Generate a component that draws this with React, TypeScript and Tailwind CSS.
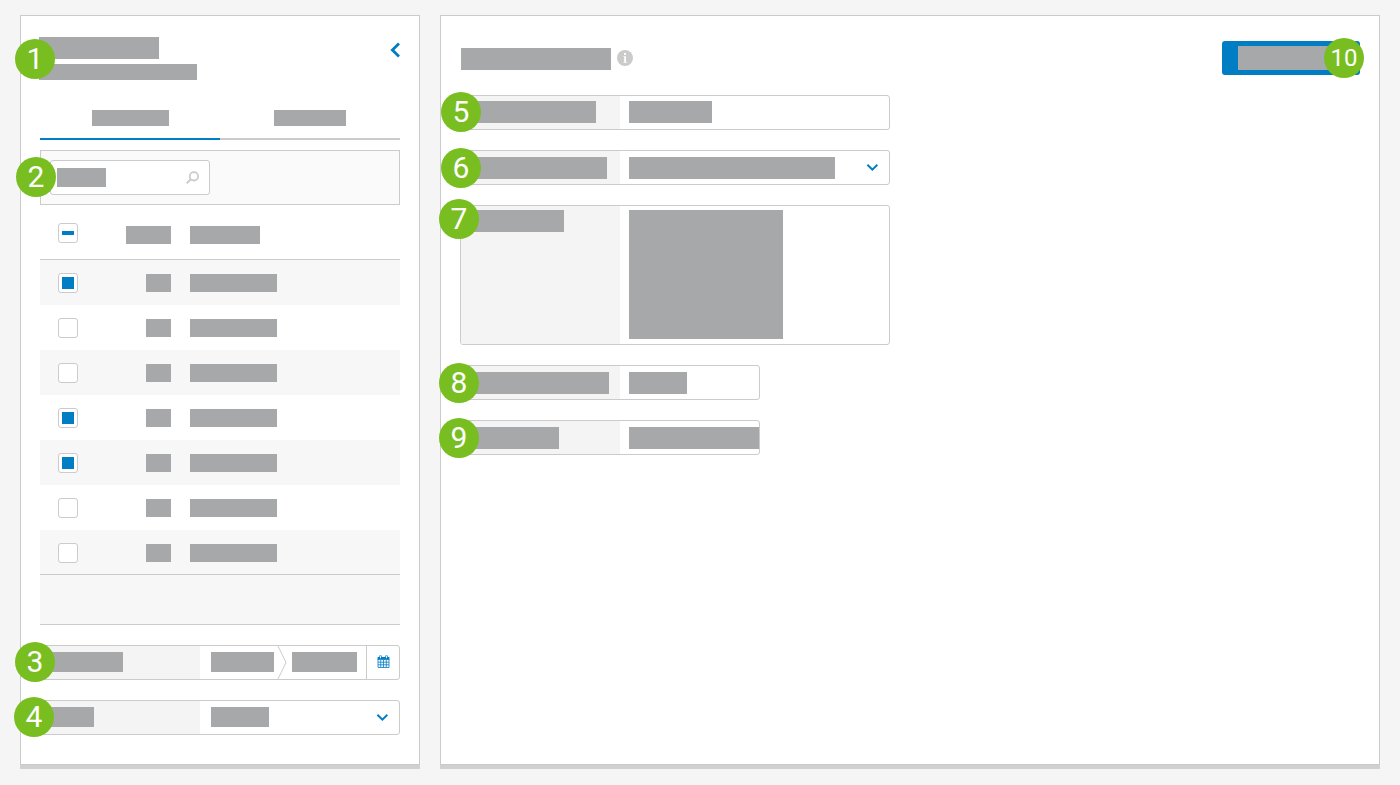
import { useEffect, useRef, useState } from 'react';
import clsx from 'clsx';

const rows = [
    { id: 1, checked: true },
    { id: 2, checked: false },
    { id: 3, checked: false },
    { id: 4, checked: true },
    { id: 5, checked: true },
    { id: 6, checked: false },
    { id: 7, checked: false },
];

const boxClass =
    'flex items-center justify-center appearance-none size-5 rounded-[3px] border border-[#cbcbcb] bg-white before:w-3 before:bg-[#007dc3] checked:before:h-3 indeterminate:before:h-1';
const overlayClass = 'absolute inset-0 size-full appearance-none bg-transparent resize-none px-2 outline-none';

function Block({ className }: { className: string }) {
    return <span className={clsx('block shrink-0 bg-[#a7a8aa]', className)} />;
}

function Badge({ value, className }: { value: number; className: string }) {
    return (
        <span
            className={clsx(
                "absolute z-10 flex size-10 items-center justify-center rounded-full bg-[#78be20] font-['Roboto',Arial,sans-serif] leading-none text-white pointer-events-none",
                value > 9 ? 'text-[24px]' : 'text-[30px]',
                className
            )}
        >
            {value}
        </span>
    );
}

function ChevronDown({ className }: { className: string }) {
    return (
        <svg className={clsx('shrink-0', className)} width="12" height="8" viewBox="0 0 12 8" fill="none" stroke="#007dc3" strokeWidth="2">
            <path d="M1.4.8 6.4 5.6 11.4.8" />
        </svg>
    );
}

function Field({ id, badge, badgeClass, labelClass, pad = 'pt-[6px]', className, children }: any) {
    return (
        <div className={clsx('relative', className)}>
            <div className="flex h-full overflow-hidden rounded-[3px] border border-[#cbcbcb] bg-white">
                <label htmlFor={id} className={clsx('w-[159px] shrink-0 bg-[#f4f4f4] pl-[9px]', pad)}>
                    <Block className={labelClass} />
                </label>
                <div className={clsx('relative flex min-w-0 flex-1 items-start', pad)}>{children}</div>
            </div>
            <Badge value={badge} className={badgeClass} />
        </div>
    );
}

function Sidebar() {
    const [items, setItems] = useState(rows);
    const allRef = useRef<HTMLInputElement>(null);
    const count = items.filter((item) => item.checked).length;
    const partial = count > 0 && count < items.length;

    useEffect(() => {
        if (allRef.current) allRef.current.indeterminate = partial;
    }, [partial]);

    const toggle = (id: number) => {
        setItems(items.map((item) => (item.id === id ? { ...item, checked: !item.checked } : item)));
    };

    return (
        <aside className="w-[400px] shrink-0 border border-[#cbcbcb] bg-white px-[19px] pb-[29px] pt-[21px] shadow-[0_4px_0_#d0d0d0]">
            <header className="relative -ml-px flex items-start justify-between">
                <div className="flex flex-col gap-[5px]">
                    <Block className="h-[22px] w-[120px]" />
                    <Block className="h-4 w-[158px]" />
                </div>
                <button type="button" aria-label="Collapse" className="pt-[5px]">
                    <svg width="11" height="16" viewBox="0 0 11 16" fill="none" stroke="#007dc3" strokeWidth="2.8">
                        <path d="M10 1.6 3.4 8l6.6 6.4" />
                    </svg>
                </button>
                <Badge value={1} className="-left-6 top-[2px]" />
            </header>

            <div role="tablist" className="mt-[30px] flex">
                <button type="button" role="tab" aria-selected="true" aria-label="First tab" className="flex flex-1 justify-center border-b-2 border-[#007dc3] pb-3">
                    <Block className="h-4 w-[77px]" />
                </button>
                <button type="button" role="tab" aria-selected="false" aria-label="Second tab" className="flex flex-1 justify-center border-b-2 border-[#cbcbcb] pb-3">
                    <Block className="h-4 w-[72px]" />
                </button>
            </div>

            <div className="relative mt-[10px] border border-[#cbcbcb] bg-[#fafafa] p-[9px]">
                <div className="relative flex h-[35px] w-40 items-start justify-between rounded-[3px] border border-[#cbcbcb] bg-white pl-[6px] pr-[10px] pt-[7px]">
                    <Block className="h-[19px] w-[49px]" />
                    <svg className="mt-[2px]" width="14" height="16" viewBox="0 0 14 16" fill="none" stroke="#cbcbcb" strokeWidth="1.8">
                        <circle cx="8.9" cy="6.3" r="4.2" />
                        <path d="M5.9 9.3 1.7 13.2" strokeWidth="2" />
                    </svg>
                    <input type="search" aria-label="Search" className={overlayClass} />
                </div>
                <Badge value={2} className="-left-[25px] top-[6px]" />
            </div>

            <table className="w-full table-fixed border-separate border-spacing-0">
                <thead>
                    <tr className="h-[55px] align-top">
                        <th className="w-[60px] border-b border-[#cbcbcb] pl-[18px] pt-[18px]">
                            <input
                                ref={allRef}
                                type="checkbox"
                                aria-label="Select all"
                                checked={count === items.length}
                                onChange={() => setItems(items.map((item) => ({ ...item, checked: count !== items.length })))}
                                className={boxClass}
                            />
                        </th>
                        <th className="w-[90px] border-b border-[#cbcbcb] pr-[19px] pt-[21px]">
                            <Block className="ml-auto h-[18px] w-[45px]" />
                        </th>
                        <th className="border-b border-[#cbcbcb] pt-[21px]">
                            <Block className="h-[18px] w-[70px]" />
                        </th>
                    </tr>
                </thead>
                <tbody>
                    {items.map((item) => (
                        <tr key={item.id} className="h-[45px] align-top odd:bg-[#f7f7f7]">
                            <td className="pl-[18px] pt-[13px]">
                                <input type="checkbox" aria-label={`Row ${item.id}`} checked={item.checked} onChange={() => toggle(item.id)} className={boxClass} />
                            </td>
                            <td className="pr-[19px] pt-[14px]">
                                <Block className="ml-auto h-[18px] w-[25px]" />
                            </td>
                            <td className="pt-[14px]">
                                <Block className="h-[18px] w-[87px]" />
                            </td>
                        </tr>
                    ))}
                </tbody>
            </table>
            <div className="-mt-px h-[51px] border-y border-[#cbcbcb] bg-[#f7f7f7]" />

            <Field id="date-from" badge={3} badgeClass="-left-[25px] -top-[3px]" labelClass="h-5 w-[73px]" pad="" className="mt-5 h-[35px] [&_label]:pt-[6px]">
                <div className="relative ml-[11px] mt-[6px]">
                    <Block className="h-5 w-[63px]" />
                    <input id="date-from" type="text" className={overlayClass} />
                </div>
                <svg className="ml-[3px] shrink-0" width="10" height="33" viewBox="0 0 10 33" fill="none" stroke="#cbcbcb">
                    <path d="M1 0 9 16.5 1 33" />
                </svg>
                <div className="relative ml-[5px] mt-[6px]">
                    <Block className="h-5 w-[65px]" />
                    <input type="text" aria-label="Date to" className={overlayClass} />
                </div>
                <button type="button" aria-label="Open calendar" className="ml-auto flex h-full w-[33px] shrink-0 items-start border-l border-[#cbcbcb] pl-[10px] pt-[9px]">
                    <svg width="13" height="14" viewBox="0 0 13 14" fill="none" stroke="#007dc3">
                        <path d="M1 4h11v8.5H1zM3.75 5v7.5M6.5 5v7.5M9.25 5v7.5M1 7.2h11M1 9.8h11" strokeWidth=".8" />
                        <path d="M.6 3.4h11.8" strokeWidth="2.6" />
                        <path d="M3.5.4v3M9.5.4v3" strokeWidth="2.4" />
                        <path d="M3.5 1v2.2M9.5 1v2.2" stroke="#fff" strokeWidth=".9" />
                    </svg>
                </button>
            </Field>

            <Field id="period" badge={4} badgeClass="-left-[26px] -top-[3px]" labelClass="h-5 w-[44px]" className="mt-5 h-[35px]">
                <Block className="ml-[11px] h-5 w-[58px]" />
                <ChevronDown className="ml-auto mr-[11px] mt-[7px]" />
                <select id="period" className={overlayClass} />
            </Field>
        </aside>
    );
}

function Details() {
    return (
        <main className="min-w-0 flex-1 border border-[#cbcbcb] bg-white px-[19px] pt-[25px] shadow-[0_4px_0_#d0d0d0]">
            <header className="flex items-start justify-between">
                <div className="flex items-center gap-[6px] pl-px pt-[7px]">
                    <Block className="h-[22px] w-[150px]" />
                    <svg className="-mt-[2px]" width="16" height="16" viewBox="0 0 16 16">
                        <circle cx="8" cy="8" r="8" fill="#cbcbcb" />
                        <path d="M7 3h2v2H7zM6.4 6.2H9V12h.8v.8H6.4V12h.8V7h-.8z" fill="#fff" />
                    </svg>
                </div>
                <button type="button" aria-label="Submit" className="relative h-[34px] w-[138px] rounded-[3px] bg-[#007dc3] pl-4">
                    <Block className="h-6 w-[106px]" />
                    <Badge value={10} className="-right-1 -top-[3px]" />
                </button>
            </header>

            <div className="mt-5 flex max-w-[430px] flex-col gap-5">
                <Field id="name" badge={5} badgeClass="-left-[19px] -top-[3px]" labelClass="h-[22px] w-[126px]" pad="pt-[5px]" className="h-[35px]">
                    <Block className="ml-[9px] h-[22px] w-[83px]" />
                    <input id="name" type="text" className={overlayClass} />
                </Field>
                <Field id="type" badge={6} badgeClass="-left-[19px] -top-[2px]" labelClass="h-[22px] w-[137px]" className="h-[35px]">
                    <Block className="ml-[9px] h-[22px] w-[206px]" />
                    <ChevronDown className="ml-auto mr-[11px] mt-[7px]" />
                    <select id="type" className={overlayClass} />
                </Field>
                <Field id="description" badge={7} badgeClass="-left-[21px] -top-[6px]" labelClass="h-[22px] w-[94px]" pad="pt-1" className="h-[140px]">
                    <Block className="ml-[9px] h-[129px] w-[154px]" />
                    <textarea id="description" className={overlayClass} />
                </Field>
                <Field id="amount" badge={8} badgeClass="-left-[21px] -top-[2px]" labelClass="h-[22px] w-[139px]" className="h-[35px] max-w-[300px]">
                    <Block className="ml-[9px] h-[22px] w-[58px]" />
                    <input id="amount" type="text" className={overlayClass} />
                </Field>
                <Field id="reference" badge={9} badgeClass="-left-[21px] -top-[2px]" labelClass="h-[22px] w-[89px]" className="h-[35px] max-w-[300px]">
                    <Block className="ml-[9px] h-[22px] w-[130px]" />
                    <input id="reference" type="text" className={overlayClass} />
                </Field>
            </div>
        </main>
    );
}

function App() {
    return (
        <div className="flex min-h-screen gap-5 bg-[#f5f5f5] px-5 pb-5 pt-[15px] font-['Liberation_Sans',Arial,sans-serif]">
            <Sidebar />
            <Details />
        </div>
    );
}

export default App;
